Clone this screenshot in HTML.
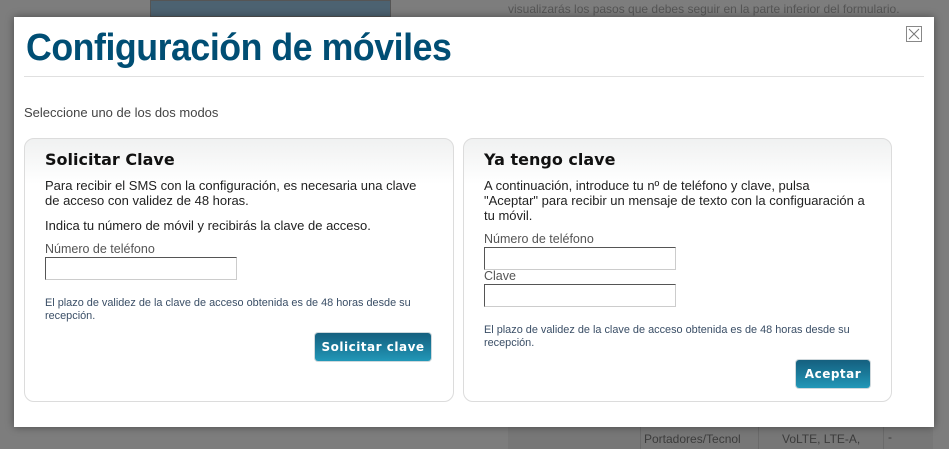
<!DOCTYPE html>
<html><head><meta charset="utf-8"><style>
*{margin:0;padding:0;box-sizing:border-box}
body{width:949px;height:449px;overflow:hidden;background:#7d7d7d;font-family:"Liberation Sans",Arial,sans-serif;position:relative}
.a{position:absolute;white-space:nowrap}
.modal{position:absolute;left:14px;top:17px;width:920px;height:410px;background:#fff;box-shadow:0 0 8px rgba(0,0,0,.4)}
.panel{position:absolute;top:138px;height:264px;border:1px solid #dcdcdc;border-radius:10px;background:linear-gradient(#f0f1f1,#fff 45px)}
.h{font-weight:bold;font-size:16px;color:#111;font-family:"DejaVu Sans",sans-serif}
.t{font-size:13px;color:#222;line-height:15px}
.lbl{font-size:12.5px;color:#555}
.inp{position:absolute;width:192px;height:23px;border:1px solid #ccc;border-top-color:#555;border-left-color:#555;background:#fff}
.s{font-size:10.9px;color:#3a4e66;line-height:13px}
.btn{position:absolute;border-radius:3px;background:linear-gradient(#15607f,#1a7a9a 50%,#2298b8);color:#fff;font-weight:bold;font-size:12px;text-align:center;font-family:"DejaVu Sans",sans-serif;letter-spacing:.5px;box-shadow:0 0 0 1px #cfd8dc}
</style></head><body>
<div class="a" style="left:150px;top:0;width:241px;height:17px;background:#4c6271;border:1px solid #555"></div>
<div class="a" style="left:508px;top:2px;font-size:12px;color:#555">visualizarás los pasos que debes seguir en la parte inferior del formulario.</div>
<div class="a" style="left:508px;top:427px;width:425px;height:22px;background:#777"></div>
<div class="a" style="left:640px;top:427px;width:300px;height:22px;border-left:1px solid #6a6a6a;"></div>
<div class="a" style="left:644px;top:432px;font-size:12px;color:#3c3c3c">Portadores/Tecnol</div>
<div class="a" style="left:758px;top:427px;height:22px;border-left:1px solid #6a6a6a"></div>
<div class="a" style="left:782px;top:432px;font-size:12px;color:#3c3c3c">VoLTE, LTE-A,</div>
<div class="a" style="left:883px;top:427px;height:22px;border-left:1px solid #6a6a6a"></div>
<div class="a" style="left:888px;top:430px;font-size:12px;color:#3c3c3c">-</div>
<div class="modal"></div>
<div class="a" style="left:26px;top:27px;font-size:38px;font-weight:bold;color:#004e74;transform:scaleX(.94);transform-origin:left top;letter-spacing:-.5px">Configuración de móviles</div>
<div class="a" style="left:906px;top:26px;width:16px;height:16px;border:1px solid #888;background:#fff"><svg width="14" height="14"><path d="M2 2L12 12M12 2L2 12" stroke="#777" stroke-width="1"/></svg></div>
<div class="a" style="left:24px;top:76px;width:900px;height:1px;background:#e0e0e0"></div>
<div class="a" style="left:24px;top:105px;font-size:13px;color:#444">Seleccione uno de los dos modos</div>

<div class="panel" style="left:24px;width:430px"></div>
<div class="a h" style="left:45px;top:150px">Solicitar Clave</div>
<div class="a t" style="left:45px;top:178px">Para recibir el SMS con la configuración, es necesaria una clave<br>de acceso con validez de 48 horas.</div>
<div class="a t" style="left:45px;top:218px">Indica tu número de móvil y recibirás la clave de acceso.</div>
<div class="a lbl" style="left:45px;top:242px">Número de teléfono</div>
<div class="inp" style="left:45px;top:257px"></div>
<div class="a s" style="left:45px;top:297px">El plazo de validez de la clave de acceso obtenida es de 48 horas desde su<br>recepción.</div>
<div class="btn" style="left:315px;top:333px;width:116px;height:28px;line-height:28px">Solicitar clave</div>

<div class="panel" style="left:463px;width:429px"></div>
<div class="a h" style="left:484px;top:150px">Ya tengo clave</div>
<div class="a t" style="left:484px;top:178px">A continuación, introduce tu nº de teléfono y clave, pulsa<br>"Aceptar" para recibir un mensaje de texto con la configuaración a<br>tu móvil.</div>
<div class="a lbl" style="left:484px;top:232px">Número de teléfono</div>
<div class="inp" style="left:484px;top:247px"></div>
<div class="a lbl" style="left:484px;top:269px">Clave</div>
<div class="inp" style="left:484px;top:284px"></div>
<div class="a s" style="left:484px;top:324px">El plazo de validez de la clave de acceso obtenida es de 48 horas desde su<br>recepción.</div>
<div class="btn" style="left:796px;top:360px;width:74px;height:28px;line-height:28px">Aceptar</div>
</body></html>
